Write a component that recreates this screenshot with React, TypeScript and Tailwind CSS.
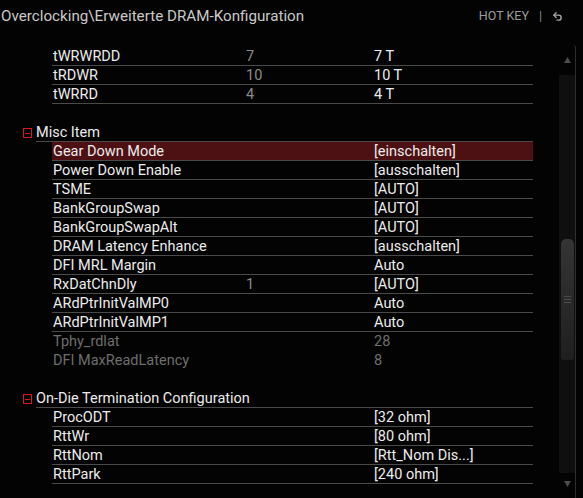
import React from "react";

type Item = { name: string; mid?: string; val: string; dim?: boolean; sel?: boolean; noLine?: boolean };

const top: Item[] = [
  { name: "tWRWRDD", mid: "7", val: "7 T" },
  { name: "tRDWR", mid: "10", val: "10 T" },
  { name: "tWRRD", mid: "4", val: "4 T" },
];

const misc: Item[] = [
  { name: "Gear Down Mode", val: "[einschalten]", sel: true },
  { name: "Power Down Enable", val: "[ausschalten]" },
  { name: "TSME", val: "[AUTO]" },
  { name: "BankGroupSwap", val: "[AUTO]" },
  { name: "BankGroupSwapAlt", val: "[AUTO]" },
  { name: "DRAM Latency Enhance", val: "[ausschalten]" },
  { name: "DFI MRL Margin", val: "Auto" },
  { name: "RxDatChnDly", mid: "1", val: "[AUTO]" },
  { name: "ARdPtrInitValMP0", val: "Auto" },
  { name: "ARdPtrInitValMP1", val: "Auto" },
  { name: "Tphy_rdlat", val: "28", dim: true, noLine: true },
  { name: "DFI MaxReadLatency", val: "8", dim: true, noLine: true },
];

const odt: Item[] = [
  { name: "ProcODT", val: "[32 ohm]" },
  { name: "RttWr", val: "[80 ohm]" },
  { name: "RttNom", val: "[Rtt_Nom Dis...]" },
  { name: "RttPark", val: "[240 ohm]" },
];

function Row({ it }: { it: Item }) {
  const txt = it.dim ? "text-[#6e6e6e]" : "text-[#ececec]";
  return (
    <div
      className={`ml-[29px] h-[19px] pt-[2px] flex items-center text-[14.5px] leading-[16px] ${
        it.noLine ? "border-b border-transparent" : "border-b border-[#4a4a4a]"
      } ${it.sel ? "bg-[#4e1113]" : ""}`}
    >
      <span className={`w-[194px] pl-[1px] ${txt}`}>{it.name}</span>
      <span className="w-[128px] text-[#8c8c8c]">{it.mid ?? ""}</span>
      <span className={txt}>{it.val}</span>
    </div>
  );
}

function Header({ title }: { title: string }) {
  return (
    <div className="h-[19px] flex items-center">
      <div className="w-[13px] flex items-center pt-[1px]">
        <div className="w-[9px] h-[10px] border border-[#e0141b] flex items-center justify-center">
          <div className="w-[5px] h-[1px] bg-[#e0141b]" />
        </div>
      </div>
      <div className="flex-1 h-[19px] pt-[2px] border-b border-[#4a4a4a] flex items-center text-[14.5px] leading-[16px] text-[#ececec]">
        {title}
      </div>
    </div>
  );
}

export default function App() {
  return (
    <div
      className="w-[583px] h-[498px] bg-[#030303] overflow-hidden flex flex-col"
      style={{ fontFamily: "Roboto, 'Liberation Sans', sans-serif" }}
    >
      <div className="h-[47px] flex items-start">
        <div className="pl-[1px] pt-[6px] text-[15.2px] leading-[20px] text-[#c9c9c9]">
          Overclocking\Erweiterte DRAM-Konfiguration
        </div>
        <div className="ml-auto pt-[7px] pr-[20px] flex items-center text-[12.5px] leading-[18px] text-[#9c9c9c]">
          <span>HOT KEY</span>
          <span className="ml-[10px] text-[#8a8a8a]">|</span>
          <svg className="ml-[10px]" width="11" height="11" viewBox="0 0 24 24" fill="none" stroke="#a8a8a8" strokeWidth="3" strokeLinecap="round" strokeLinejoin="round">
            <path d="M9 14 4 9l5-5" />
            <path d="M4 9h10.5a5.5 5.5 0 0 1 5.5 5.5a5.5 5.5 0 0 1-5.5 5.5H11" />
          </svg>
        </div>
      </div>
      <div className="flex flex-1">
        <div className="w-[510px] ml-[23px] flex flex-col">
          {top.map((it) => (
            <Row key={it.name} it={it} />
          ))}
          <div className="h-[19px]" />
          <Header title="Misc Item" />
          {misc.map((it) => (
            <Row key={it.name} it={it} />
          ))}
          <div className="h-[19px]" />
          <Header title="On-Die Termination Configuration" />
          {odt.map((it) => (
            <Row key={it.name} it={it} />
          ))}
        </div>
        <div className="ml-[26px] w-[17px] -mt-[2px] border-r border-[#2e2e2e] rounded-tr-[3px] flex flex-col items-start">
          <div className="h-[30px] w-[16px] flex items-center justify-center">
            <svg width="7" height="6" viewBox="0 0 7 6"><path d="M3.5 0 L7 6 L0 6 Z" fill="#4a4a4a" /></svg>
          </div>
          <div className="w-[16px] h-[398px] bg-[#0f0f0f] flex flex-col items-center">
            <div className="mt-[164px] w-[13px] h-[121px] rounded-t-[5px] rounded-b-[3px] bg-gradient-to-b from-[#353535] to-[#1f1f1f] flex flex-col items-center justify-center gap-[2px]">
              <div className="w-[7px] h-[1px] bg-[#4c4c4c]" />
              <div className="w-[7px] h-[1px] bg-[#4c4c4c]" />
              <div className="w-[7px] h-[1px] bg-[#4c4c4c]" />
            </div>
          </div>
          <div className="h-[22px] w-[16px] flex items-center justify-center">
            <svg width="7" height="6" viewBox="0 0 7 6"><path d="M0 0 L7 0 L3.5 6 Z" fill="#4a4a4a" /></svg>
          </div>
        </div>
      </div>
    </div>
  );
}
